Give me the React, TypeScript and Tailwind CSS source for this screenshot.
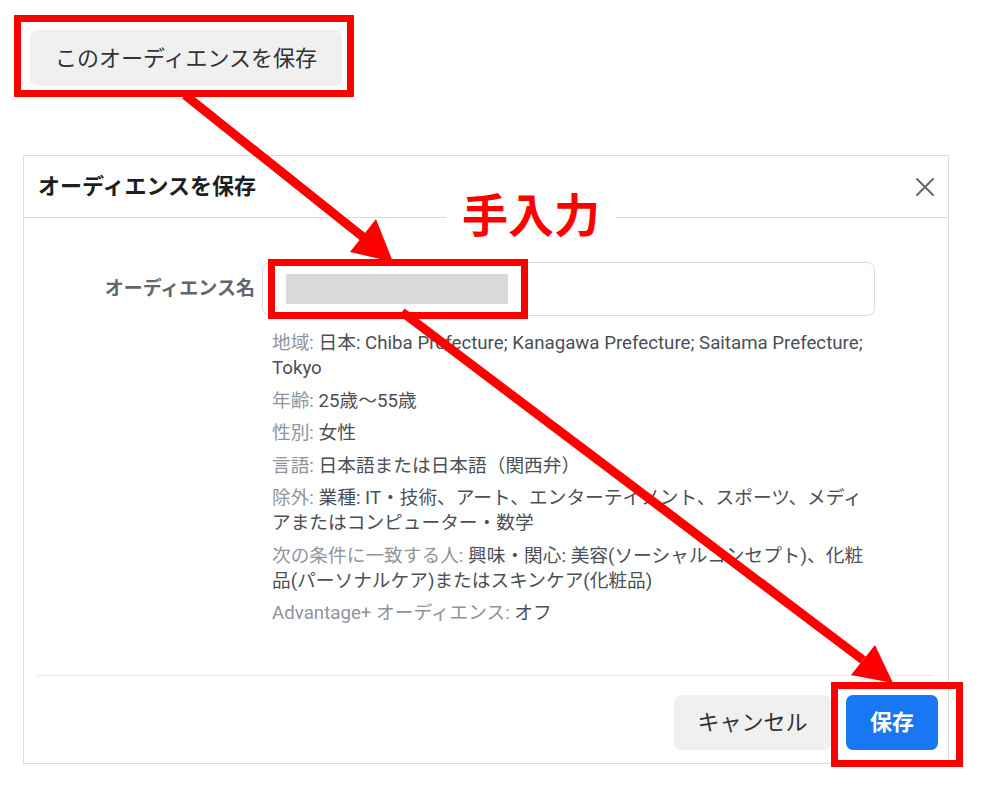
import React from "react";

type Row = { key: string; lines: string[] };

const rows: Row[] = [
  {
    key: "地域:",
    lines: ["日本: Chiba Prefecture; Kanagawa Prefecture; Saitama Prefecture;", "Tokyo"],
  },
  { key: "年齢:", lines: ["25歳〜55歳"] },
  { key: "性別:", lines: ["女性"] },
  { key: "言語:", lines: ["日本語または日本語（関西弁）"] },
  {
    key: "除外:",
    lines: ["業種: IT・技術、アート、エンターテイメント、スポーツ、メディ", "アまたはコンピューター・数学"],
  },
  {
    key: "次の条件に一致する人:",
    lines: ["興味・関心: 美容(ソーシャルコンセプト)、化粧", "品(パーソナルケア)またはスキンケア(化粧品)"],
  },
  { key: "Advantage+ オーディエンス:", lines: ["オフ"] },
];

const Arrows = () => (
  <svg
    className="absolute left-0 top-0 pointer-events-none z-20"
    width={983}
    height={789}
    viewBox="0 0 983 789"
  >
    <line x1={185} y1={95} x2={363} y2={237} stroke="#ff0000" strokeWidth={9} />
    <polygon points="393,262 350,252 376,219" fill="#ff0000" />
    <line x1={402} y1={312} x2={863} y2={660} stroke="#ff0000" strokeWidth={9} />
    <polygon points="893,683 851,675 875,645" fill="#ff0000" />
  </svg>
);

export default function App() {
  return (
    <div className="relative w-[983px] h-[789px] bg-white overflow-hidden font-[Roboto,'Noto_Sans_CJK_JP',sans-serif]">
      <div className="pl-[14px] pt-[15px]">
        <div className="inline-flex border-[7px] border-[#ff0000] pl-[9px] pr-[5px] pt-[8px] pb-[4px]">
          <button
            type="button"
            className="w-[312px] h-[56px] rounded-[7px] bg-[#f0f0f0] text-[22px] text-[#333333]"
          >
            このオーディエンスを保存
          </button>
        </div>
      </div>

      <div className="relative ml-[23px] mt-[58px] w-[926px] h-[609px] border border-[#dcdcdc] flex flex-col">
        <div className="h-[62px] border-b border-[#dcdcdc] flex items-center justify-between pl-[14px] pr-[13px]">
          <h2 className="text-[22px] font-bold text-[#1c1e21]">オーディエンスを保存</h2>
          <svg width={20} height={20} viewBox="0 0 20 20">
            <path d="M2 2 L18 18 M18 2 L2 18" stroke="#606770" strokeWidth={2} strokeLinecap="round" />
          </svg>
        </div>

        <div className="absolute left-[422px] top-[37px] bg-white px-[16px] text-[46px] leading-none font-bold text-[#ff0000]">
          手入力
        </div>

        <div className="h-[457px] pt-[44px] flex">
          <div className="w-[238px] h-[54px] pr-[7px] flex items-center justify-end text-[19px] font-bold text-[#606770]">
            オーディエンス名
          </div>
          <div className="flex flex-col">
            <div className="relative w-[613px] h-[54px] rounded-[8px] border border-[#dcdcdc]">
              <div className="absolute left-[5px] -top-[4px] w-[260px] h-[60px] border-[7px] border-[#ff0000] z-10">
                <div className="ml-[11px] mt-[8px] w-[222px] h-[30px] bg-[#d9d9d9]" />
              </div>
            </div>
            <div className="ml-[10px] mt-[15px] flex flex-col gap-[7.5px] text-[18.7px] leading-[25px] whitespace-nowrap">
              {rows.map((r) => (
                <div key={r.key}>
                  {r.lines.map((l, i) => (
                    <div key={i}>
                      {i === 0 && <span className="text-[#90949c]">{r.key} </span>}
                      <span className="text-[#4b4f56]">{l}</span>
                    </div>
                  ))}
                </div>
              ))}
            </div>
          </div>
        </div>

        <div className="mx-[14px] border-t border-[#e4e6eb]" />

        <div className="flex-1 flex justify-end items-start gap-[15px] pt-[19px] pr-[10px]">
          <button
            type="button"
            className="w-[157px] h-[55px] rounded-[7px] bg-[#f0f0f0] text-[22px] text-[#333333]"
          >
            キャンセル
          </button>
          <div className="relative">
            <div className="absolute -left-[15px] -top-[13px] w-[132px] h-[85px] border-[7px] border-[#ff0000] z-10" />
            <button
              type="button"
              className="w-[92px] h-[55px] rounded-[7px] bg-[#1877f2] text-[22px] font-bold text-white"
            >
              保存
            </button>
          </div>
        </div>
      </div>

      <Arrows />
    </div>
  );
}
